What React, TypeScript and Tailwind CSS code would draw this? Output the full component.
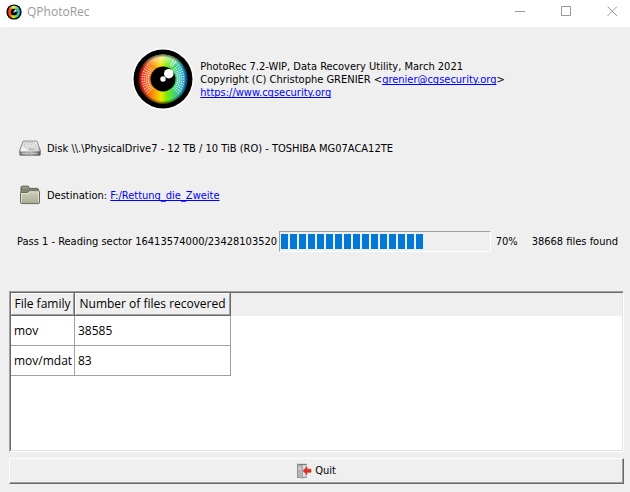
import type { ReactNode } from "react";

const CHUNKS = 16;

const families = [
  { name: "mov", count: 38585 },
  { name: "mov/mdat", count: 83 },
];

function ray(angle: number, from: number, to: number) {
  const a = (angle * Math.PI) / 180;
  return `M${Math.cos(a) * from} ${-Math.sin(a) * from}L${Math.cos(a) * to} ${-Math.sin(a) * to}`;
}

const sideAngles = [-42, -35, -28, -21, -14, -7, 0, 7, 14, 21, 28, 35, 42];

function EyeLogo({ id, className }: { id: string; className: string }) {
  const small = id === "small";
  return (
    <svg className={className} viewBox="-31 -31 62 62" aria-hidden="true">
      <defs>
        <linearGradient id={`${id}-iris`} x1="0" x2="1" y1="0" y2="0">
          <stop offset="0" stopColor="#e8131b" />
          <stop offset="0.14" stopColor="#f5481c" />
          <stop offset="0.28" stopColor="#fb8a0c" />
          <stop offset="0.47" stopColor="#f2e600" />
          <stop offset="0.56" stopColor="#80f000" />
          <stop offset="0.72" stopColor="#45d66a" />
          <stop offset="0.88" stopColor="#2fb6cc" />
          <stop offset="1" stopColor="#1a6fd0" />
        </linearGradient>
        <linearGradient id={`${id}-shine`} x1="0" x2="0" y1="0" y2="1">
          <stop offset="0" stopColor="#fff" stopOpacity="0.75" />
          <stop offset="0.25" stopColor="#fff" stopOpacity="0" />
        </linearGradient>
        <radialGradient id={`${id}-edge`}>
          <stop offset="0.88" stopColor="#000" stopOpacity="0" />
          <stop offset="1" stopColor="#000" stopOpacity="0.6" />
        </radialGradient>
      </defs>
      <circle r="31" fill="#fff" />
      <circle r="29.5" fill="#000" />
      <circle r="24.5" fill={`url(#${id}-iris)`} />
      <circle r="24.5" fill={`url(#${id}-shine)`} />
      <circle r="24.5" fill={`url(#${id}-edge)`} />
      {!small && (
        <g stroke="#fff" fill="none">
          <path
            strokeWidth="0.9"
            strokeDasharray="1.4 0.6"
            d={sideAngles.map((a) => ray(a, 14, 22) + ray(180 - a, 14, 22)).join("")}
          />
          <path strokeWidth="0.9" d={ray(54, 15, 22) + ray(61, 15, 22)} />
        </g>
      )}
      <circle r={small ? 13 : 12.5} fill="#000" />
      <circle cx="5.8" cy="-5.3" r="4.8" fill="#fff" />
      <circle r="2.7" fill="#fff" />
    </svg>
  );
}

function DriveIcon() {
  return (
    <svg className="h-4 w-[22px] shrink-0" viewBox="0 0 22 16" aria-hidden="true">
      <defs>
        <linearGradient id="drive-front" x1="0" x2="1">
          <stop offset="0" stopColor="#777" />
          <stop offset="0.5" stopColor="#b5b5b5" />
          <stop offset="1" stopColor="#555" />
        </linearGradient>
        <linearGradient id="drive-top" x1="0" x2="1" y2="1">
          <stop offset="0" stopColor="#d4d4d4" />
          <stop offset="0.5" stopColor="#f6f6f6" />
          <stop offset="1" stopColor="#c2c2c2" />
        </linearGradient>
      </defs>
      <path d="M4.2 1h13.6l3.6 9.5v4q0 .9-.9.9h-19q-.9 0-.9-.9v-4z" fill="url(#drive-front)" stroke="#777" strokeWidth=".7" />
      <path d="M4.5 1.4h13l3.3 9q-.1 1-1 1H2.2q-1 0-1-1z" fill="url(#drive-top)" />
      <ellipse cx="11" cy="5.5" rx="6" ry="3.3" fill="#e2e2e2" stroke="#b3b3b3" strokeWidth=".7" />
      <ellipse cx="11" cy="5.3" rx="2" ry="1" fill="#fff" stroke="#aaa" strokeWidth=".5" />
      <path d="M10 8.5h4.5l1 1.7H9z" fill="#bcbcbc" />
      <path d="M3 13.3h6M12 13.3h7" stroke="#ddd" strokeWidth=".8" />
    </svg>
  );
}

function FolderIcon() {
  return (
    <svg className="h-5 w-[22px] shrink-0" viewBox="0 0 22 20" aria-hidden="true">
      <defs>
        <linearGradient id="folder-front" x1="0" x2="0" y1="0" y2="1">
          <stop offset="0" stopColor="#d0d1bd" />
          <stop offset="1" stopColor="#a9ab93" />
        </linearGradient>
      </defs>
      <path d="M2 17V2.5Q2 1.2 3.2 1.2h5.6q1 0 1.2 1.2l.3 1h8q1.2 0 1.2 1.2V17z" fill="#838570" stroke="#5c5e4e" />
      <path d="M3.3 2.5h5.2" stroke="#a5a792" />
      <path d="M1.5 8.5q0-1 1-1h6l1.8-1.7h9.2q1 0 1 1v10.7q0 1.1-1.1 1.1H2.6q-1.1 0-1.1-1.1z" fill="url(#folder-front)" stroke="#686a58" />
      <path d="M2.500 17V8.500h6.400l1.800-1.700h8.800V17" fill="none" stroke="#e4e5d6" strokeWidth=".8" />
    </svg>
  );
}

function QuitIcon() {
  return (
    <svg className="size-4 shrink-0" viewBox="0 0 16 16" aria-hidden="true">
      <path d="M1 .8h9.5v14H1z" fill="#777" />
      <path d="M4 2h5.7v12H4z" fill="#dedede" />
      <path d="M1.5 1.3l5 1.5v12.6l-5-1.5z" fill="#b5b5b5" stroke="#909090" strokeWidth=".6" />
      <path d="M2.3 3.5l3 .8v3l-3-.8z" fill="#cacaca" />
      <path d="M7 7.7l4-3.7v2.200h4v3h-4v2.300z" fill="#e0311f" stroke="#c4281b" strokeWidth=".6" />
    </svg>
  );
}

function Link({ href, children }: { href: string; children: ReactNode }) {
  return (
    <a href={href} className="text-[#0000ff] underline [text-decoration-skip-ink:none]">
      {children}
    </a>
  );
}

function TitleBar() {
  return (
    <header className="flex h-[27px] items-center bg-white pr-3 pl-1.5 text-[#999]">
      <EyeLogo id="small" className="mb-1 size-4" />
      <h1 className="mb-1 ml-[5px] flex-1 font-['Open_Sans','Noto_Sans',sans-serif] text-xs">QPhotoRec</h1>
      <div className="mb-1 flex gap-[35px]">
        <button type="button" aria-label="Minimize">
          <svg className="size-[11px]" viewBox="0 0 11 11" stroke="currentColor">
            <path d="M0 5.5h10" />
          </svg>
        </button>
        <button type="button" aria-label="Maximize">
          <svg className="size-[11px]" viewBox="0 0 11 11" stroke="currentColor" fill="none">
            <path d="M.5.5h9v9h-9z" />
          </svg>
        </button>
        <button type="button" aria-label="Close">
          <svg className="size-[11px]" viewBox="0 0 11 11" stroke="currentColor">
            <path d="M.5.5l9.5 9.5M10 .5L.5 10" />
          </svg>
        </button>
      </div>
    </header>
  );
}

function ProgressBar({ percent }: { percent: number }) {
  return (
    <div
      role="progressbar"
      aria-label="Recovery progress"
      aria-valuenow={percent}
      aria-valuemin={0}
      aria-valuemax={100}
      className="flex h-[21px] flex-1 gap-0.5 border border-t-[#a0a0a0] border-r-white border-b-white border-l-[#a0a0a0] px-px py-0.5"
    >
      {Array.from({ length: CHUNKS }, (_, i) => (
        <span key={i} className="w-[7px] bg-[#0078d7]" />
      ))}
    </div>
  );
}

function HeaderCell({ children }: { children: ReactNode }) {
  return (
    <th className="border-r border-b border-[#696969] bg-[#efefef] p-0 font-normal">
      <div className="flex h-[22px] items-center justify-center border border-t-white border-r-[#a0a0a0] border-b-[#a0a0a0] border-l-white">
        {children}
      </div>
    </th>
  );
}

function ResultsTable() {
  return (
    <div className="flex flex-1 flex-col border border-t-[#a0a0a0] border-r-white border-b-white border-l-[#a0a0a0]">
      <div className="flex-1 border border-t-[#696969] border-r-[#e3e3e3] border-b-[#e3e3e3] border-l-[#696969] bg-white font-['Open_Sans','Noto_Sans',sans-serif] text-xs">
        <table className="w-full table-fixed border-separate border-spacing-0 text-left whitespace-nowrap">
          <colgroup>
            <col className="w-16" />
            <col className="w-[156px]" />
            <col />
          </colgroup>
          <thead>
            <tr>
              <HeaderCell>File family</HeaderCell>
              <HeaderCell>Number of files recovered</HeaderCell>
              <td className="bg-[#efefef] p-0" />
            </tr>
          </thead>
          <tbody>
            {families.map((family) => (
              <tr key={family.name} className="h-[30px]">
                <td className="border-r border-b border-[#a0a0a0] px-[3px] py-0">{family.name}</td>
                <td className="border-r border-b border-[#a0a0a0] px-[3px] py-0">{family.count}</td>
              </tr>
            ))}
          </tbody>
        </table>
      </div>
    </div>
  );
}

export default function App() {
  return (
    <div className="flex min-h-screen flex-col bg-[#efefef] font-['DejaVu_Sans_Condensed','DejaVu_Sans',sans-serif] text-[11px] leading-[13px] text-black">
      <TitleBar />
      <main className="flex flex-1 flex-col pt-[21px] pr-1.5 pb-2 pl-[9px]">
        <section className="flex items-center justify-center gap-1.5 pl-1">
          <EyeLogo id="large" className="size-[62px]" />
          <div>
            <p>PhotoRec 7.2-WIP, Data Recovery Utility, March 2021</p>
            <p>
              Copyright (C) Christophe GRENIER &lt;
              <Link href="mailto:grenier@cgsecurity.org">grenier@cgsecurity.org</Link>&gt;
            </p>
            <p>
              <Link href="https://www.cgsecurity.org">https://www.cgsecurity.org</Link>
            </p>
          </div>
        </section>

        <section className="mt-[26px] flex h-6 items-center gap-1.5 pl-2.5">
          <DriveIcon />
          <p>Disk \\.\PhysicalDrive7 - 12 TB / 10 TiB (RO) - TOSHIBA MG07ACA12TE</p>
        </section>

        <section className="mt-[23px] flex h-6 items-center gap-1.5 pl-2.5">
          <FolderIcon />
          <p>
            Destination: <Link href="#destination">F:/Rettung_die_Zweite</Link>
          </p>
        </section>

        <section className="mt-6 mb-[39px] flex items-center pr-1.5 pl-2 whitespace-nowrap">
          <p className="mr-0.5">Pass 1 - Reading sector 16413574000/23428103520</p>
          <ProgressBar percent={70} />
          <p className="ml-[5px]">70%</p>
          <p className="ml-3.5">38668 files found</p>
        </section>

        <ResultsTable />

        <button
          type="button"
          className="mt-1.5 flex h-[26px] items-stretch border border-t-white border-r-[#696969] border-b-[#696969] border-l-white"
        >
          <span className="flex flex-1 items-center justify-center gap-[3px] border-r border-b border-[#a0a0a0]">
            <QuitIcon />
            Quit
          </span>
        </button>
      </main>
    </div>
  );
}
